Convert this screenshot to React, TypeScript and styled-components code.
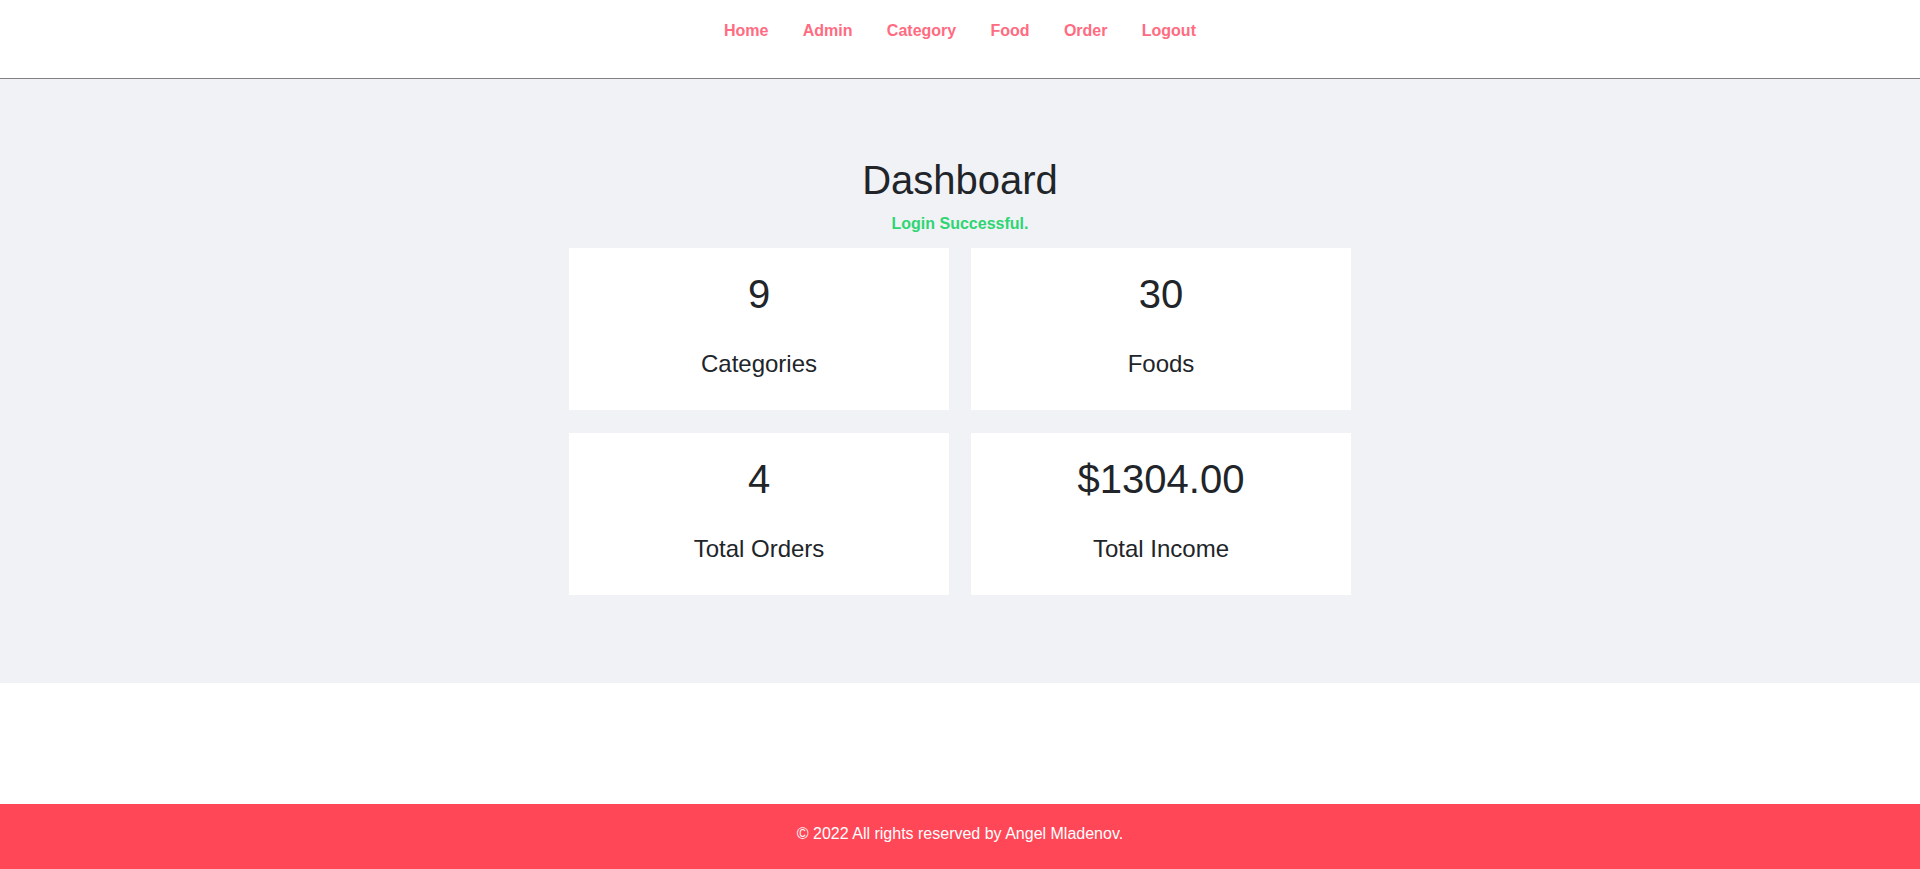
import React from "react";
import styled, { createGlobalStyle } from "styled-components";

const GlobalStyle = createGlobalStyle`
  html, body {
    margin: 0;
    padding: 0;
    background: #ffffff;
    font-family: "Liberation Sans", Arial, sans-serif;
  }
  * { box-sizing: border-box; }
`;

const Page = styled.div`
  display: flex;
  flex-direction: column;
  min-height: 869px;
`;

const Header = styled.header`
  height: 79px;
  border-bottom: 1px solid #808080;
  background: #ffffff;
  padding-top: 22px;
`;

const Menu = styled.nav`
  display: flex;
  justify-content: center;
  gap: 34.3px;
`;

const MenuLink = styled.a`
  font-size: 16px;
  line-height: 18.4px;
  font-weight: 700;
  color: #ff6b81;
  text-decoration: none;
`;

const Main = styled.main`
  background: #f1f2f6;
  padding: 78px 0 88px;
  display: flex;
  flex-direction: column;
  align-items: center;
`;

const Title = styled.h1`
  margin: 0;
  font-size: 40px;
  line-height: 46px;
  font-weight: 400;
  color: #212529;
`;

const Message = styled.div`
  margin-top: 12px;
  font-size: 16px;
  line-height: 18.4px;
  font-weight: 700;
  color: #2ed573;
`;

const Grid = styled.div`
  margin-top: 14.6px;
  display: grid;
  grid-template-columns: 380px 380px;
  column-gap: 22px;
  row-gap: 23px;
`;

const Card = styled.div`
  background: #ffffff;
  height: 162px;
  padding-top: 23px;
  text-align: center;
  color: #212529;
`;

const Value = styled.div`
  font-size: 40px;
  line-height: 46px;
`;

const Label = styled.div`
  margin-top: 33px;
  font-size: 24px;
  line-height: 28px;
`;

const Spacer = styled.div`
  flex: 1;
`;

const Footer = styled.footer`
  height: 65px;
  background: #ff4757;
  padding-top: 21px;
  text-align: center;
  color: #ffffff;
  font-size: 16px;
  line-height: 18.4px;
`;

const links = ["Home", "Admin", "Category", "Food", "Order", "Logout"];

const stats = [
  { value: "9", label: "Categories" },
  { value: "30", label: "Foods" },
  { value: "4", label: "Total Orders" },
  { value: "$1304.00", label: "Total Income" },
];

export default function App() {
  return (
    <>
      <GlobalStyle />
      <Page>
        <Header>
          <Menu>
            {links.map((l) => (
              <MenuLink key={l} href="#">
                {l}
              </MenuLink>
            ))}
          </Menu>
        </Header>
        <Main>
          <Title>Dashboard</Title>
          <Message>Login Successful.</Message>
          <Grid>
            {stats.map((s) => (
              <Card key={s.label}>
                <Value>{s.value}</Value>
                <Label>{s.label}</Label>
              </Card>
            ))}
          </Grid>
        </Main>
        <Spacer />
        <Footer>© 2022 All rights reserved by Angel Mladenov.</Footer>
      </Page>
    </>
  );
}
